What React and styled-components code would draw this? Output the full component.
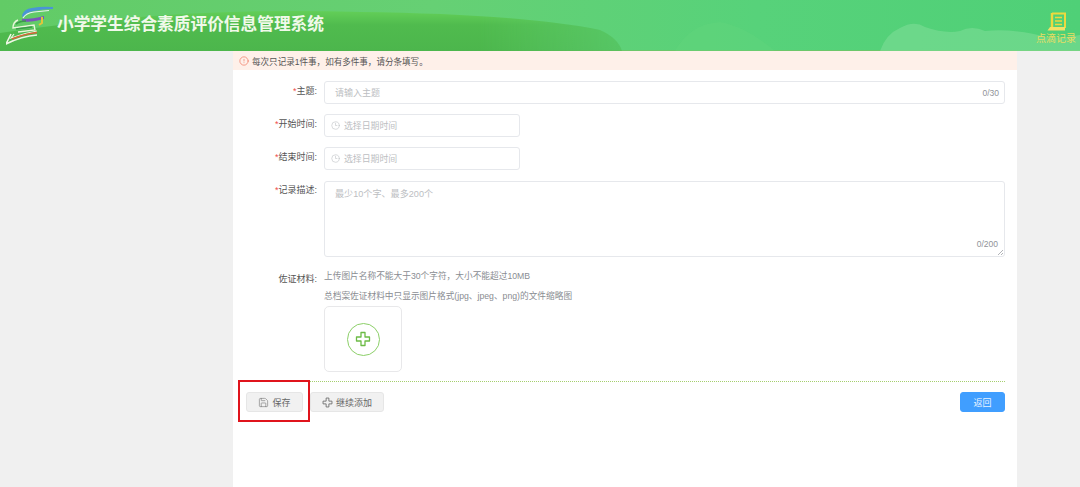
import React from "react";
import styled, { createGlobalStyle } from "styled-components";
import { Clock3, Save, AlertCircle } from "lucide-react";

const CJK = `"Liberation Sans", "Noto Sans CJK SC", sans-serif`;

const GlobalStyle = createGlobalStyle`
  html, body { margin: 0; padding: 0; background: #f0f0f0; font-family: ${CJK}; }
  body { height: 487px; overflow: hidden; }
`;

const Page = styled.div`
  width: 1080px;
  height: 487px;
  overflow: hidden;
  position: relative;
`;

const Header = styled.header`
  height: 51px;
  position: relative;
  overflow: hidden;
  display: flex;
  align-items: center;
  justify-content: space-between;
  background: linear-gradient(90deg, #62cb66 0%, #66d074 40%, #57d27a 70%, #4fd077 100%);
  box-shadow: inset 0 -1px 0 #6cc76a;
`;

const HeaderArt = styled.svg`
  position: absolute;
  left: 0;
  top: 0;
  width: 1080px;
  height: 51px;
`;

const Brand = styled.div`
  position: relative;
  display: flex;
  align-items: center;
  gap: 3px;
  padding-left: 6px;
`;

const Title = styled.h1`
  margin: 0 0 1px;
  font-size: 16.7px;
  line-height: 20px;
  font-weight: 700;
  color: #f0f9ea;
  white-space: nowrap;
`;

const RecordLink = styled.div`
  position: relative;
  width: 44px;
  margin-right: 2px;
  padding-top: 5px;
  display: flex;
  flex-direction: column;
  align-items: center;
  gap: 1px;
  font-size: 10px;
  line-height: 12px;
  color: #e8dc62;
  white-space: nowrap;
`;

const Main = styled.main`
  width: 784px;
  height: 436px;
  margin-left: 233px;
  background: #fff;
`;

const Notice = styled.div`
  height: 19px;
  padding-left: 6px;
  display: flex;
  align-items: center;
  gap: 3px;
  background: #fef0e9;
  color: #555;
  font-size: 8.55px;
  white-space: nowrap;
  svg { color: #ef6a50; }
`;

const Form = styled.form`
  padding: 11px 12px 0 0;
  display: flex;
  flex-direction: column;
`;

const Row = styled.div`
  display: flex;
  margin-bottom: ${(p) => p.$gap ?? 10}px;
`;

const Label = styled.label`
  width: 84px;
  flex: none;
  text-align: right;
  font-size: 9px;
  line-height: 20px;
  color: #555;
  white-space: nowrap;
  margin-right: 7px;
  i { color: #ef4b4b; font-style: normal; }
`;

const Field = styled.div`
  box-sizing: border-box;
  width: ${(p) => p.$width || "100%"};
  height: ${(p) => p.$height || 23}px;
  border: 1px solid #e6e8ec;
  border-radius: 3px;
  background: #fff;
  display: flex;
  align-items: center;
  justify-content: space-between;
  padding: 0 5px 0 10px;
  font-size: 9px;
  color: #bcbec2;
  white-space: nowrap;
  flex: ${(p) => (p.$width ? "none" : 1)};
`;

const DateHint = styled.span`
  display: flex;
  align-items: center;
  gap: 4px;
  margin-left: -4px;
  font-size: 8.9px;
`;

const Counter = styled.span`
  font-size: 8.5px;
  color: #909399;
`;

const TextArea = styled(Field)`
  position: relative;
  flex: 1;
  align-items: flex-start;
  padding-top: 4px;
  margin-top: 1px;
  font-size: 9.1px;
`;

const AreaCounter = styled(Counter)`
  position: absolute;
  right: 6px;
  bottom: 7px;
`;

const Grip = styled.svg`
  position: absolute;
  right: 0;
  bottom: 0;
  width: 7px;
  height: 7px;
`;

const Uploads = styled.div`
  flex: 1;
  display: flex;
  flex-direction: column;
  align-items: flex-start;
  font-size: 8.7px;
  color: #8a8d92;
  white-space: nowrap;
`;

const Hint = styled.div`
  line-height: 14px;
  margin-bottom: 6px;
`;

const UploadBox = styled.div`
  box-sizing: border-box;
  width: 78px;
  height: 66px;
  margin-top: -3px;
  border: 1px solid #e8e8ea;
  border-radius: 5px;
  display: flex;
  align-items: center;
  justify-content: center;
`;

const Ring = styled.div`
  box-sizing: border-box;
  width: 33px;
  height: 33px;
  border: 1px solid #8ccf68;
  border-radius: 50%;
  display: flex;
  align-items: center;
  justify-content: center;
`;

const Actions = styled.div`
  margin: 9px 0 0 13px;
  padding-top: 10px;
  border-top: 1px dotted #a5cf6e;
  display: flex;
  align-items: center;
  gap: 7px;
`;

const Button = styled.button`
  box-sizing: border-box;
  height: 20px;
  width: ${(p) => p.$width}px;
  padding: 0;
  border: 1px solid #e6e6e6;
  border-radius: 3px;
  background: #f1f1f1;
  color: #666;
  font-family: inherit;
  font-size: 9px;
  display: flex;
  align-items: center;
  justify-content: center;
  gap: 3px;
`;

const BackButton = styled(Button)`
  margin-left: auto;
  border-color: #409eff;
  background: #409eff;
  color: #e8f3ff;
`;

const Highlight = styled.div`
  position: absolute;
  left: 238px;
  top: 380px;
  width: 72px;
  height: 42px;
  box-sizing: border-box;
  border: 2px solid #e0141c;
`;

const Logo = () => (
  <svg width="48" height="40" viewBox="0 0 48 40" fill="none">
    <path d="M16 9 Q18 3 26 2 Q36 0 47 1 L47 3 Q36 3 28 5 Q20 6 17 12Z" fill="#4a94d6" />
    <path d="M17 12 Q20 7 28 6 L43 4.5" stroke="#e8f4ee" strokeWidth="1.2" />
    <path d="M16 13 Q28 13 38 10 L38 13 Q28 16 16 16Z" fill="#7a55bc" />
    <path d="M36 11 L36 17 L33 19" stroke="#e2c53a" strokeWidth="2" />
    <path d="M12 14 Q7 16 7 22 L28 19 L29 24 L12 26" stroke="#eaf5dc" strokeWidth="1.4" />
    <path d="M10 18 Q14 15 20 15" stroke="#3c9c4a" strokeWidth="1.6" />
    <path d="M10 23 L26 21" stroke="#3c9c4a" strokeWidth="1.6" />
    <path d="M5 28 L0 38 Q16 30 31 29" stroke="#eef6e4" strokeWidth="1.6" />
    <path d="M8 28 L5 32 Q18 27 31 25" stroke="#eaf5dc" strokeWidth="1.2" />
    <path d="M6 33 Q18 28 31 26.5" stroke="#d9653a" strokeWidth="1.6" />
  </svg>
);

const RecordIcon = () => (
  <svg width="19" height="20" viewBox="0 0 19 20" fill="none">
    <path d="M5 1.5 H18 V16" stroke="#ecd93e" strokeWidth="2" />
    <path d="M5 1 V15" stroke="#ecd93e" strokeWidth="2.4" />
    <path d="M8 5.5 H15 M8 9 H15 M8 12.5 H15" stroke="#ecd93e" strokeWidth="1.3" />
    <path d="M3 15 H18 V18.5 H0.5Z" fill="#f2e266" />
  </svg>
);

const Plus = ({ size, color, width }) => (
  <svg width={size} height={size} viewBox="0 0 16 16" fill="none">
    <path
      d="M6 1.5 H10 V6 H14.5 V10 H10 V14.5 H6 V10 H1.5 V6 H6Z"
      stroke={color}
      strokeWidth={width}
      strokeLinejoin="round"
    />
  </svg>
);

export default function App() {
  return (
    <Page>
      <GlobalStyle />
      <Header>
        <HeaderArt viewBox="0 0 1080 51" preserveAspectRatio="none">
          <defs>
            <linearGradient id="hill" x1="0" y1="0" x2="0" y2="1">
              <stop offset="0" stopColor="#63cf58" />
              <stop offset="0.35" stopColor="#50bb4e" />
              <stop offset="1" stopColor="#4cb64c" />
            </linearGradient>
            <linearGradient id="hillFade" x1="0" y1="0" x2="1" y2="0">
              <stop offset="0" stopColor="#fff" />
              <stop offset="0.75" stopColor="#fff" />
              <stop offset="1" stopColor="#fff" stopOpacity="0.35" />
            </linearGradient>
            <mask id="hillMask">
              <rect width="640" height="51" fill="url(#hillFade)" />
            </mask>
          </defs>
          <path
            d="M0 33 Q180 6 360 12 Q520 14 600 30 Q618 38 622 51 L0 51Z"
            fill="url(#hill)"
            mask="url(#hillMask)"
          />
          <path d="M675 51 Q690 24 720 22 Q745 26 775 51Z" fill="#66d67e" opacity="0.3" />
          <path
            d="M880 51 Q886 34 900 28 Q914 20 925 27 Q945 34 960 31 Q972 25 985 31 Q1015 28 1050 38 Q1065 38 1080 35 L1080 51Z"
            fill="#7ddc96"
            opacity="0.6"
          />
        </HeaderArt>
        <Brand>
          <Logo />
          <Title>小学学生综合素质评价信息管理系统</Title>
        </Brand>
        <RecordLink>
          <RecordIcon />
          点滴记录
        </RecordLink>
      </Header>
      <Main>
        <Notice>
          <AlertCircle size={10} strokeWidth={1.5} />
          每次只记录1件事，如有多件事，请分条填写。
        </Notice>
        <Form>
          <Row>
            <Label><i>*</i>主题:</Label>
            <Field>
              请输入主题
              <Counter>0/30</Counter>
            </Field>
          </Row>
          <Row>
            <Label><i>*</i>开始时间:</Label>
            <Field $width="196px">
              <DateHint><Clock3 size={9} strokeWidth={1.5} />选择日期时间</DateHint>
            </Field>
          </Row>
          <Row>
            <Label><i>*</i>结束时间:</Label>
            <Field $width="196px">
              <DateHint><Clock3 size={9} strokeWidth={1.5} />选择日期时间</DateHint>
            </Field>
          </Row>
          <Row $gap={12}>
            <Label><i>*</i>记录描述:</Label>
            <TextArea $height={76}>
              最少10个字、最多200个
              <AreaCounter>0/200</AreaCounter>
              <Grip viewBox="0 0 7 7">
                <path d="M1 6 L6 1 M4 6 L6 4" stroke="#909399" strokeWidth="0.7" />
              </Grip>
            </TextArea>
          </Row>
          <Row $gap={0}>
            <Label>佐证材料:</Label>
            <Uploads>
              <Hint>上传图片名称不能大于30个字符，大小不能超过10MB</Hint>
              <Hint>总档案佐证材料中只显示图片格式(jpg、jpeg、png)的文件缩略图</Hint>
              <UploadBox>
                <Ring><Plus size={16} color="#6cbb45" width={1.3} /></Ring>
              </UploadBox>
            </Uploads>
          </Row>
          <Actions>
            <Button type="button" $width={57}>
              <Save size={11} strokeWidth={1.2} />保存
            </Button>
            <Button type="button" $width={74}>
              <Plus size={11} color="#666" width={1.2} />继续添加
            </Button>
            <BackButton type="button" $width={45}>返回</BackButton>
          </Actions>
        </Form>
      </Main>
      <Highlight />
    </Page>
  );
}
